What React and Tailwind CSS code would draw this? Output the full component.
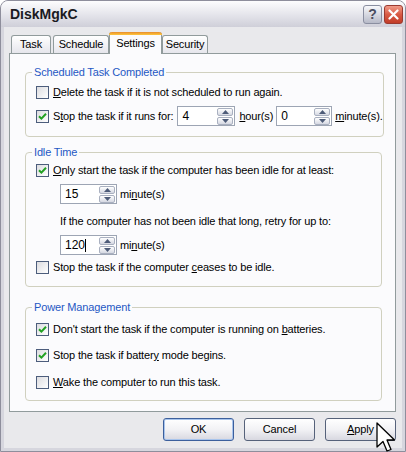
const font = { fontFamily: '"Liberation Sans", Arial, sans-serif' };

function CheckBox({ checked }) {
    return (
        <span className="w-[13px] h-[13px] shrink-0 border border-[#4c5d7c] bg-gradient-to-br from-[#dcdce0] to-white flex items-center justify-center">
            {checked && (
                <svg width="9" height="9" viewBox="0 0 9 9">
                    <path d="M1 4.2 L3.4 6.6 L8 1.8" stroke="#21a121" strokeWidth="2" fill="none" />
                </svg>
            )}
        </span>
    );
}

function SpinArrow({ up }) {
    return (
        <span className="h-[8px] rounded-[2px] border border-[#a9b0c0] bg-gradient-to-b from-white to-[#d5d8e2] flex items-center justify-center">
            <svg width="7" height="4" viewBox="0 0 7 4">
                <path d={up ? 'M0 4 L3.5 0 L7 4 Z' : 'M0 0 L3.5 4 L7 0 Z'} fill="#4d5b78" />
            </svg>
        </span>
    );
}

function Spin({ value, width, caret }) {
    return (
        <div className={`${width} h-[20px] shrink-0 border border-[#9da5b4] bg-white flex items-center pl-[4px] pr-px`}>
            <span className="flex-1 flex items-center text-[12px] tracking-normal text-black">
                {value}
                {caret && <span className="w-px h-[13px] bg-black" />}
            </span>
            <div className="w-[16px] flex flex-col gap-px">
                <SpinArrow up />
                <SpinArrow />
            </div>
        </div>
    );
}

function CheckRow({ checked, children, className = '' }) {
    return (
        <div className={`h-[14px] flex items-center gap-[4px] ${className}`}>
            <CheckBox checked={checked} />
            <span className="leading-[14px] whitespace-nowrap">{children}</span>
        </div>
    );
}

function Group({ title, className = '', children }) {
    return (
        <fieldset className={`w-[357px] ml-[15px] border border-[#d0d0bf] rounded-[4px] ${className}`}>
            <legend className="ml-[6px] px-[2px] leading-[13px] text-[#1f58c4]">{title}</legend>
            {children}
        </fieldset>
    );
}

function Tab({ label, width, active }) {
    if (active) {
        return (
            <div className={`${width} h-[22px] -mb-px relative z-10 bg-[#fbfbfd] border-x border-[#919b9c] rounded-t-[3px] flex flex-col`}>
                <div className="h-[3px] rounded-t-[3px] bg-gradient-to-b from-[#e68b2c] to-[#ffc83c] -mx-px" />
                <div className="flex-1 flex items-center justify-center pb-[2px]">{label}</div>
            </div>
        );
    }
    return (
        <div className={`${width} h-[18px] border border-b-0 border-[#919b9c] rounded-t-[3px] bg-gradient-to-b from-white to-[#e6e6ec] flex items-center justify-center`}>
            {label}
        </div>
    );
}

function Button({ children, primary }) {
    return (
        <div
            className={`w-[71px] h-[23px] rounded-[3px] border flex items-center justify-center bg-gradient-to-b from-white via-[#f2f2f5] to-[#d8d8e0] ${
                primary ? 'border-[#3c5f9c] shadow-[inset_0_0_0_1px_#a8c4ec]' : 'border-[#56627a]'
            }`}
        >
            {children}
        </div>
    );
}

export default function App() {
    return (
        <div className="relative w-[406px] h-[452px] overflow-hidden bg-white" style={font}>
            <div className="w-full h-full flex flex-col bg-[#d6d6de] border border-[#8e8e9c] rounded-t-[8px] text-[11px] tracking-[-0.15px] text-black">
                {/* caption */}
                <div className="h-[26px] shrink-0 rounded-t-[7px] bg-gradient-to-b from-[#fdfdfe] via-[#e6e6ec] to-[#cfcfd9] flex items-center pl-[9px] pr-[2px]">
                    <span className="flex-1 font-bold text-[14px] tracking-normal text-[#1a1a22]">DiskMgkC</span>
                    <div className="w-[19px] h-[19px] rounded-[3px] border border-[#8a8ea0] bg-gradient-to-b from-[#f8f8fb] to-[#b7bac8] flex items-center justify-center text-[14px] font-bold text-[#4a4e60]">
                        ?
                    </div>
                    <div className="w-[19px] h-[19px] ml-[2px] rounded-[3px] border border-[#9a3a30] bg-gradient-to-b from-[#f09a88] via-[#d85a44] to-[#c23c28] flex items-center justify-center">
                        <svg width="11" height="11" viewBox="0 0 11 11">
                            <path d="M1.5 1.5 L9.5 9.5 M9.5 1.5 L1.5 9.5" stroke="white" strokeWidth="2.2" strokeLinecap="round" />
                        </svg>
                    </div>
                </div>

                {/* dialog body */}
                <div className="flex-1 mx-[3px] mb-[3px] bg-[#e9e9ec] flex flex-col">
                    <div className="h-[26px] shrink-0 flex items-end pl-[7px]">
                        <Tab label="Task" width="w-[40px]" />
                        <div className="w-[2px]" />
                        <Tab label="Schedule" width="w-[56px]" />
                        <Tab label="Settings" width="w-[53px]" active />
                        <Tab label="Security" width="w-[46px]" />
                    </div>

                    <div className="w-[387px] ml-[5px] h-[359px] border border-[#919b9c] bg-[#fbfbfd] pt-[12px]">
                        <Group title="Scheduled Task Completed" className="pb-[10px]">
                            <div className="pl-[10px] pt-[6px] flex flex-col">
                                <CheckRow>
                                    <u>D</u>elete the task if it is not scheduled to run again.
                                </CheckRow>
                                <div className="mt-[7px] h-[20px] flex items-center">
                                    <CheckRow checked>
                                        S<u>t</u>op the task if it runs for:
                                    </CheckRow>
                                    <div className="ml-[4px]" />
                                    <Spin value="4" width="w-[58px]" />
                                    <span className="ml-[4px]">
                                        <u>h</u>our(s)
                                    </span>
                                    <div className="ml-[3px]" />
                                    <Spin value="0" width="w-[56px]" />
                                    <span className="ml-[3px]">
                                        <u>m</u>inute(s).
                                    </span>
                                </div>
                            </div>
                        </Group>

                        <Group title="Idle Time" className="mt-[9px] pb-[12px]">
                            <div className="pl-[10px] pt-[4px] flex flex-col">
                                <CheckRow checked>
                                    <u>O</u>nly start the task if the computer has been idle for at least:
                                </CheckRow>
                                <div className="mt-[7px] pl-[24px] flex items-center gap-[3px]">
                                    <Spin value="15" width="w-[57px]" />
                                    <span>
                                        mi<u>n</u>ute(s)
                                    </span>
                                </div>
                                <div className="mt-[11px] pl-[24px] leading-[13px]">
                                    If the computer has not been idle that long, retry for up to:
                                </div>
                                <div className="mt-[7px] pl-[24px] flex items-center gap-[3px]">
                                    <Spin value="120" width="w-[57px]" caret />
                                    <span>
                                        mi<u>n</u>ute(s)
                                    </span>
                                </div>
                                <CheckRow className="mt-[5px]">
                                    Stop the task if the computer <u>c</u>eases to be idle.
                                </CheckRow>
                            </div>
                        </Group>

                        <Group title="Power Management" className="mt-[14px] pb-[11px]">
                            <div className="pl-[10px] pt-[8px] flex flex-col">
                                <CheckRow checked>
                                    Don't start the task if the computer is running on <u>b</u>atteries.
                                </CheckRow>
                                <CheckRow checked className="mt-[12px]">
                                    Stop the task if batter<u>y</u> mode begins.
                                </CheckRow>
                                <CheckRow className="mt-[13px]">
                                    <u>W</u>ake the computer to run this task.
                                </CheckRow>
                            </div>
                        </Group>
                    </div>

                    <div className="w-[387px] ml-[5px] mt-[6px] flex justify-end gap-[10px]">
                        <Button primary>OK</Button>
                        <Button>Cancel</Button>
                        <Button>
                            <span>
                                <u>A</u>pply
                            </span>
                        </Button>
                    </div>
                </div>
            </div>

            {/* mouse pointer over Apply */}
            <svg className="absolute left-[376px] top-[422px]" width="20" height="31" viewBox="0 0 20 31">
                <path d="M1 1 L1 25 L7 19.5 L11 29 L15 27.5 L11 18 L18.5 18 Z" fill="white" stroke="black" strokeWidth="1.3" strokeLinejoin="round" />
            </svg>
        </div>
    );
}
